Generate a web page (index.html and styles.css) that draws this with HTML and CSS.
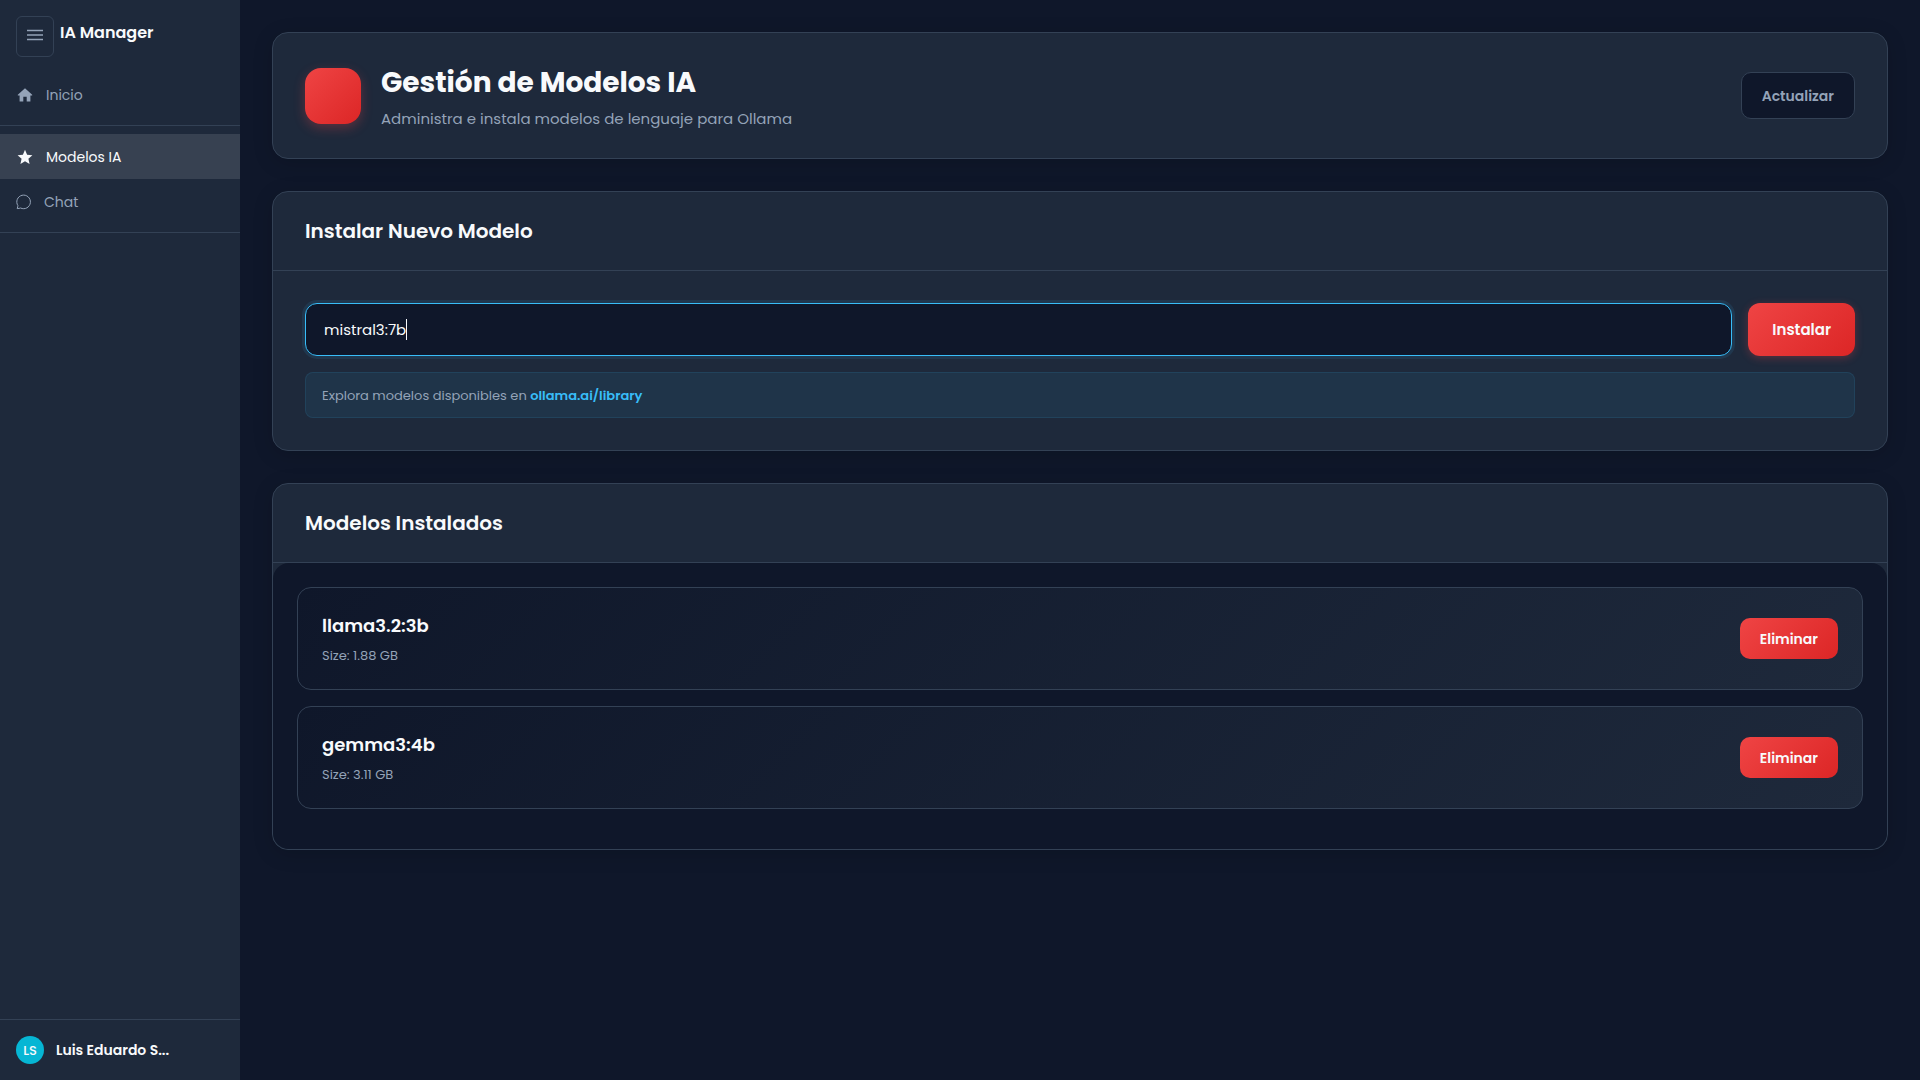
FILE: index.html
```html
<!DOCTYPE html>
<html lang="es">
<head>
    <meta charset="UTF-8">
    <meta name="viewport" content="width=device-width, initial-scale=1.0">
    <title>IA Manager - Modelos IA</title>
    <link rel="stylesheet" href="styles.css">
</head>
<body>
    <aside class="sidebar">
        <div class="sidebar-top">
            <button class="menu-btn" type="button" aria-label="Menú">
                <svg width="16" height="12" viewBox="0 0 16 12" aria-hidden="true">
                    <path d="M0 1.500h16M0 6h16M0 10.500h16" fill="none" stroke="currentColor" stroke-width="1.600"/>
                </svg>
            </button>
            <span class="brand">IA Manager</span>
        </div>

        <nav>
            <ul class="nav-group">
                <li>
                    <a class="nav-link" href="#inicio">
                        <svg class="nav-icon" viewBox="0 0 18 18" aria-hidden="true">
                            <path d="M9 2.200 1.800 8.700v.8h1.800v5.900h3.700v-4.600h3.400v4.600h3.700V9.500h1.800v-.8z" fill="currentColor"/>
                        </svg>
                        Inicio
                    </a>
                </li>
            </ul>
            <ul class="nav-group">
                <li>
                    <a class="nav-link active" href="#modelos">
                        <svg class="nav-icon" viewBox="0 0 18 18" aria-hidden="true">
                            <path d="m9 1.800 2.100 4.900 5.300.5-4 3.500 1.200 5.200L9 13.200l-4.600 2.700 1.200-5.200-4-3.500 5.300-.5z" fill="currentColor"/>
                        </svg>
                        Modelos IA
                    </a>
                </li>
                <li>
                    <a class="nav-link nav-chat" href="#chat">
                        <svg class="nav-icon nav-icon-small" viewBox="0 0 16 16" aria-hidden="true">
                            <path d="M1.200 14.600c.4-1.300.7-2.400.7-3A6.800 6.800 0 1 1 4.600 14c-.9.200-2 .6-3.400.6z" fill="none" stroke="currentColor" stroke-width="1"/>
                        </svg>
                        Chat
                    </a>
                </li>
            </ul>
        </nav>

        <div class="user">
            <span class="avatar">LS</span>
            <span class="user-name">Luis Eduardo S...</span>
        </div>
    </aside>

    <main class="content">
        <header class="card page-header">
            <div class="page-icon"></div>
            <div class="page-title">
                <h1>Gestión de Modelos IA</h1>
                <p>Administra e instala modelos de lenguaje para Ollama</p>
            </div>
            <button class="refresh-btn" type="button">Actualizar</button>
        </header>

        <section class="card">
            <div class="card-header">
                <h2>Instalar Nuevo Modelo</h2>
            </div>
            <div class="card-body">
                <form class="install-form" onsubmit="return false">
                    <div class="input-wrap">
                        <input class="model-input" type="text" name="model" value="mistral3:7b" aria-label="Nombre del modelo" autocomplete="off" spellcheck="false">
                        <span class="caret"></span>
                    </div>
                    <button class="install-btn" type="submit">Instalar</button>
                </form>
                <p class="info">Explora modelos disponibles en <a href="#library">ollama.ai/library</a></p>
            </div>
        </section>

        <section class="card">
            <div class="card-header">
                <h2>Modelos Instalados</h2>
            </div>
            <ul class="model-list">
                <li class="model-item">
                    <div>
                        <h3>llama3.2:3b</h3>
                        <p>Size: 1.88 GB</p>
                    </div>
                    <button class="delete-btn" type="button">Eliminar</button>
                </li>
                <li class="model-item">
                    <div>
                        <h3>gemma3:4b</h3>
                        <p>Size: 3.11 GB</p>
                    </div>
                    <button class="delete-btn" type="button">Eliminar</button>
                </li>
            </ul>
        </section>
    </main>

    <script>
        const modelInput = document.querySelector('.model-input');
        const caret = document.querySelector('.caret');

        modelInput.focus();
        modelInput.setSelectionRange(modelInput.value.length, modelInput.value.length);

        // El cursor propio se oculta al escribir y vuelve el del navegador
        modelInput.addEventListener('input', () => {
            caret.remove();
            modelInput.style.caretColor = 'auto';
        });
    </script>
</body>
</html>
```
FILE: styles.css
```css
* {
    box-sizing: border-box;
    margin: 0;
    padding: 0;
}
body {
    display: flex;
    min-height: 100vh;
    font-family: Poppins, Inter, sans-serif;
    background: #0f172a;
    color: #f8fafc;
}
ul {
    list-style: none;
}
button,
input {
    font-family: inherit;
}
button {
    cursor: pointer;
}

/* Barra lateral */
.sidebar {
    display: flex;
    flex-direction: column;
    flex-shrink: 0;
    width: 240px;
    background: #1e293b;
}
.sidebar-top {
    display: flex;
    gap: 6px;
    padding: 16px 16px 7px;
}
.menu-btn {
    display: flex;
    align-items: center;
    justify-content: center;
    width: 38px;
    height: 41px;
    padding-bottom: 3px;
    background: transparent;
    border: 1px solid #334155;
    border-radius: 6px;
    color: #94a3b8;
}
.brand {
    font-size: 16px;
    font-weight: 600;
    line-height: 34px;
}
.nav-group {
    padding: 8px 0;
    border-bottom: 1px solid #334155;
}
.nav-link {
    display: flex;
    align-items: center;
    gap: 12px;
    height: 45px;
    padding: 0 16px;
    color: #94a3b8;
    font-size: 14px;
    line-height: 22px;
    text-decoration: none;
}
.nav-link.active {
    background: #374151;
    color: #f8fafc;
}
.nav-icon {
    width: 18px;
    height: 18px;
}
.nav-icon-small {
    width: 16px;
    height: 16px;
}
.user {
    display: flex;
    align-items: center;
    gap: 12px;
    margin-top: auto;
    padding: 16px;
    border-top: 1px solid #334155;
}
.avatar {
    width: 28px;
    height: 28px;
    border-radius: 50%;
    background: #06b6d4;
    font-size: 13px;
    font-weight: 500;
    line-height: 30px;
    text-align: center;
}
.user-name {
    font-size: 14px;
    font-weight: 600;
}

/* Contenido */
.content {
    display: flex;
    flex: 1;
    flex-direction: column;
    gap: 32px;
    padding: 32px;
}
.card {
    background: #1e293b;
    border: 1px solid #334155;
    border-radius: 16px;
    box-shadow: 0 4px 20px rgba(0, 0, 0, 0.15);
}
.page-header {
    display: flex;
    align-items: center;
    gap: 20px;
    padding: 29px 32px;
}
.page-icon {
    width: 56px;
    height: 56px;
    border-radius: 16px;
    background: linear-gradient(135deg, #ef4444, #dc2626);
    box-shadow: 0 4px 12px rgba(239, 68, 68, 0.3);
}
.page-title {
    flex: 1;
}
.page-title h1 {
    margin-bottom: 5px;
    font-size: 28px;
    font-weight: 700;
    line-height: 42px;
}
.page-title p {
    color: #94a3b8;
    font-size: 15px;
    line-height: 20px;
}
.refresh-btn {
    height: 47px;
    padding: 2px 20px 0;
    background: #0f172a;
    border: 1px solid #334155;
    border-radius: 10px;
    color: #94a3b8;
    font-size: 14px;
    font-weight: 600;
}
.card-header {
    padding: 24px 32px;
    border-bottom: 1px solid #334155;
}
.card-header h2 {
    font-size: 20px;
    font-weight: 600;
    line-height: 30px;
}
.card-body {
    padding: 32px;
}
.install-form {
    display: flex;
    gap: 16px;
    margin-bottom: 16px;
}
.input-wrap {
    position: relative;
    flex: 1;
    min-width: 0;
}
.model-input {
    display: block;
    width: 100%;
    height: 53px;
    padding: 0 18px;
    background: #0f172a;
    border: 1px solid #334155;
    border-radius: 12px;
    caret-color: transparent;
    color: #f8fafc;
    font-size: 15px;
}
.model-input:focus {
    outline: none;
    border-color: #38bdf8;
    box-shadow: 0 0 0 3px rgba(56, 189, 248, 0.1);
}
.caret {
    display: none;
    position: absolute;
    top: 16px;
    left: 101px;
    width: 1px;
    height: 21px;
    background: #f8fafc;
}
.model-input:focus + .caret {
    display: block;
}
.install-btn {
    padding: 0 24px;
    border: none;
    border-radius: 12px;
    background: linear-gradient(135deg, #ef4444, #dc2626);
    box-shadow: 0 2px 8px rgba(239, 68, 68, 0.3);
    color: #f8fafc;
    font-size: 15px;
    font-weight: 600;
}
.info {
    padding: 13px 16px 11px;
    background: rgba(56, 189, 248, 0.08);
    border: 1px solid rgba(56, 189, 248, 0.1);
    border-radius: 8px;
    color: #94a3b8;
    font-size: 13px;
    line-height: 20px;
}
.info a {
    color: #38bdf8;
    font-weight: 600;
    text-decoration: none;
}

/* Lista de modelos */
.model-list {
    display: flex;
    flex-direction: column;
    gap: 16px;
    padding: 24px 24px 40px;
    background: #0f172a;
    border-radius: 16px;
}
.model-item {
    display: flex;
    align-items: center;
    justify-content: space-between;
    padding: 24px;
    background: linear-gradient(135deg, #0f172a, #1e293b);
    border: 1px solid #334155;
    border-radius: 14px;
}
.model-item h3 {
    margin-bottom: 8px;
    font-size: 18px;
    font-weight: 600;
    line-height: 27px;
}
.model-item p {
    color: #94a3b8;
    font-size: 13px;
    line-height: 18px;
}
.delete-btn {
    height: 41px;
    padding: 2px 20px 0;
    border: none;
    border-radius: 10px;
    background: linear-gradient(135deg, #ef4444, #dc2626);
    color: #f8fafc;
    font-size: 14px;
    font-weight: 600;
}
```
